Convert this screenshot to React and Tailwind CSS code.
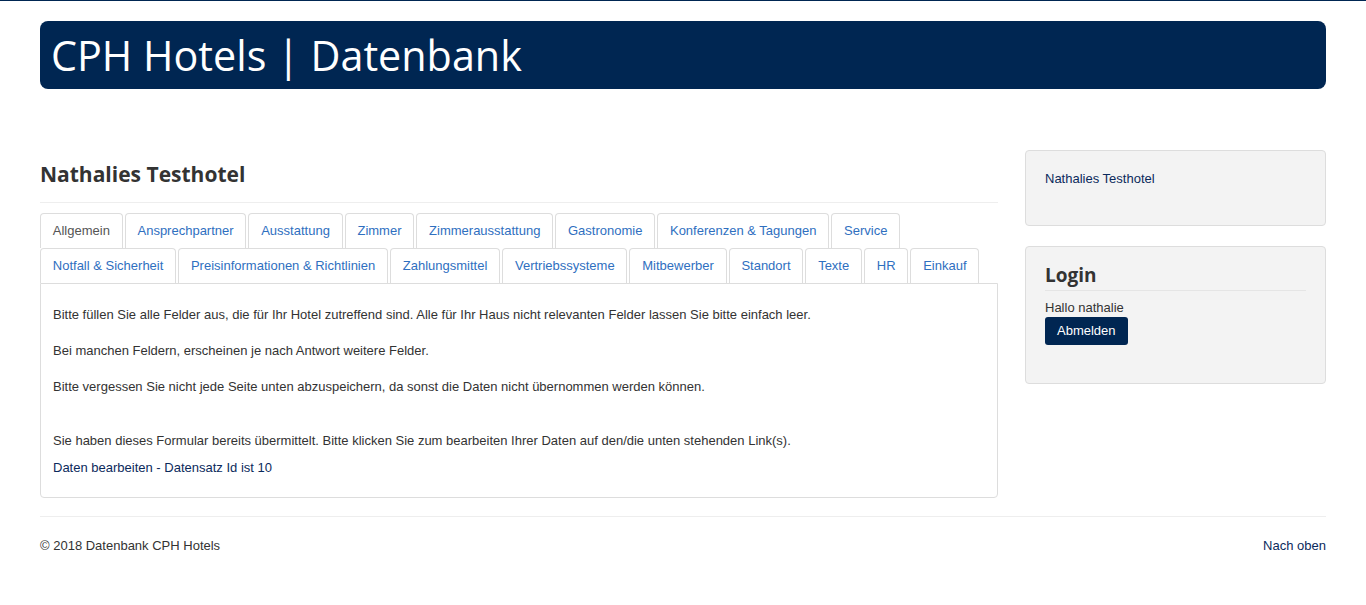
import React from 'react';

const tabsRow1 = ['Allgemein', 'Ansprechpartner', 'Ausstattung', 'Zimmer', 'Zimmerausstattung', 'Gastronomie', 'Konferenzen & Tagungen', 'Service'];
const tabsRow2 = ['Notfall & Sicherheit', 'Preisinformationen & Richtlinien', 'Zahlungsmittel', 'Vertriebssysteme', 'Mitbewerber', 'Standort', 'Texte', 'HR', 'Einkauf'];

function Tab({ label, active }) {
  return (
    <li className="mr-[2px] list-none">
      <a
        href="#"
        className={`block h-[35px] rounded-t-[4px] border border-b-0 border-[#ddd] px-[11.8px] pt-[8px] leading-[18px] ${
          active ? 'bg-white text-[#555]' : 'text-[#2f6fbf]'
        }`}
      >
        {label}
      </a>
    </li>
  );
}

export default function App() {
  return (
    <div className="min-h-[605px] border-t border-[#002652] bg-white text-[13px] leading-[18px] text-[#333] font-['Liberation_Sans',Arial,sans-serif]">
      <div className="mx-[40px] pt-[20px]">
        {/* Header */}
        <header className="flex h-[68px] items-center rounded-lg bg-[#002652] px-[11px]">
          <h1 className="font-['Open_Sans',sans-serif] text-[41.3px] leading-[48px] text-white">
            CPH Hotels | Datenbank
          </h1>
        </header>

        <div className="mt-[61px] flex gap-[27px]">
          {/* Main column */}
          <main className="w-[958px] shrink-0">
            <div className="border-b border-[#eee] pb-[15px] pt-[11px]">
              <h2 className="font-['Open_Sans',sans-serif] text-[21px] font-bold leading-[26px] text-[#333]">
                Nathalies Testhotel
              </h2>
            </div>

            <div className="mt-[10px]">
              <ul className="flex flex-wrap">
                {tabsRow1.map((t, i) => (
                  <Tab key={t} label={t} active={i === 0} />
                ))}
              </ul>
              <ul className="flex flex-wrap">
                {tabsRow2.map((t) => (
                  <Tab key={t} label={t} />
                ))}
              </ul>
              <div className="rounded-b-[4px] border border-[#ddd] px-[12px] pb-[20px] pt-[22px]">
                <p>Bitte füllen Sie alle Felder aus, die für Ihr Hotel zutreffend sind. Alle für Ihr Haus nicht relevanten Felder lassen Sie bitte einfach leer.</p>
                <p className="mt-[18px]">Bei manchen Feldern, erscheinen je nach Antwort weitere Felder.</p>
                <p className="mt-[18px]">Bitte vergessen Sie nicht jede Seite unten abzuspeichern, da sonst die Daten nicht übernommen werden können.</p>
                <p className="mt-[36px]">Sie haben dieses Formular bereits übermittelt. Bitte klicken Sie zum bearbeiten Ihrer Daten auf den/die unten stehenden Link(s).</p>
                <p className="mt-[9px]">
                  <a href="#" className="text-[#0b2a5c]">Daten bearbeiten - Datensatz Id ist 10</a>
                </p>
              </div>
            </div>
          </main>

          {/* Sidebar */}
          <aside className="flex w-[301px] shrink-0 flex-col gap-[20px]">
            <div className="h-[76px] rounded-[4px] border border-[#ddd] bg-[#f3f3f3] px-[19px] pt-[19px]">
              <a href="#" className="text-[#0b2a5c]">Nathalies Testhotel</a>
            </div>
            <div className="h-[138px] rounded-[4px] border border-[#ddd] bg-[#f3f3f3] px-[19px] pt-[16px]">
              <h3 className="border-b border-[#e5e5e5] pb-[3px] font-['Open_Sans',sans-serif] text-[19px] font-bold leading-[24px] text-[#333]">
                Login
              </h3>
              <div className="mt-[8px]">Hallo nathalie</div>
              <button className="h-[28px] rounded-[3px] bg-[#002652] px-[12px] text-[13px] leading-[18px] text-white">
                Abmelden
              </button>
            </div>
          </aside>
        </div>

        {/* Footer */}
        <footer className="mt-[18px] border-t border-[#eee] pt-[20px]">
          <div className="flex justify-between">
            <span>© 2018 Datenbank CPH Hotels</span>
            <a href="#" className="text-[#0b2a5c]">Nach oben</a>
          </div>
        </footer>
      </div>
    </div>
  );
}
